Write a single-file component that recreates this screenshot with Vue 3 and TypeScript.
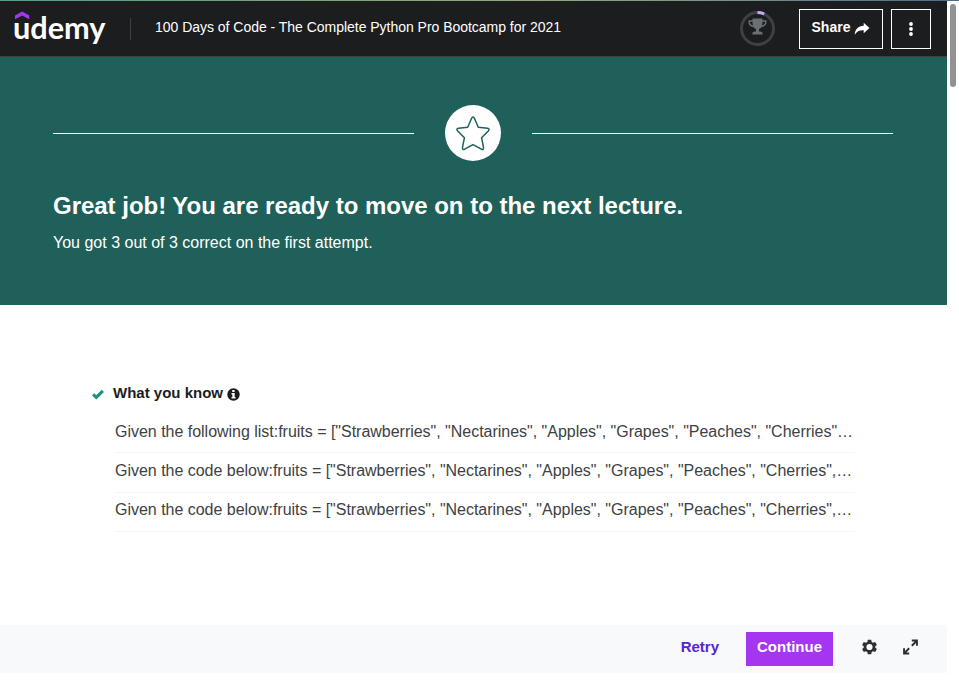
<script setup lang="ts">
const questions: string[] = [
  'Given the following list:fruits = ["Strawberries", "Nectarines", "Apples", "Grapes", "Peaches", "Cherries"…',
  'Given the code below:fruits = ["Strawberries", "Nectarines", "Apples", "Grapes", "Peaches", "Cherries",…',
  'Given the code below:fruits = ["Strawberries", "Nectarines", "Apples", "Grapes", "Peaches", "Cherries",…',
]
</script>

<template>
  <div class="window">
    <div class="strip"></div>
    <div class="body">
      <main class="page">
        <header class="header">
          <svg class="logo" width="96" height="40" viewBox="0 0 96 40">
            <path d="M3 11.300V7.400L10.200 3.400L17.300 7.400V11.300L10.200 7.400Z" fill="#a435f0" />
            <text class="logo-text" x="1" y="30.500" textLength="92.500" lengthAdjust="spacingAndGlyphs">udemy</text>
          </svg>
          <span class="divider"></span>
          <span class="course">100 Days of Code - The Complete Python Pro Bootcamp for 2021</span>
          <svg class="progress" width="35" height="35" viewBox="0.5 0.5 35 35">
            <circle cx="18" cy="18" r="16" fill="none" stroke="#3e4143" stroke-width="3" />
            <path d="M18 2A16 16 0 0 1 24.700 3.500" fill="none" stroke="#c0adf5" stroke-width="3" />
            <path fill-rule="evenodd" d="M13 8h10v1.800h4v2.200c0 2.500-2.300 4.400-5.200 4.700-.7 1-1.500 1.600-2.300 1.900v2.400h1.100c1.700 0 2.500.8 2.500 2.100v1H12.900v-1c0-1.300.8-2.100 2.500-2.100h1.100v-2.400c-.8-.3-1.600-.9-2.300-1.900C11.300 16.400 9 14.500 9 12V9.800h4zm0 3.200h-2.500v.8c0 1.400 1.200 2.500 3 3-.3-1-.5-2.400-.5-3.800zm10 0c0 1.400-.2 2.800-.5 3.800 1.800-.5 3-1.600 3-3v-.8z" fill="#6a6f73" />
          </svg>
          <button class="outline share">
            <span>Share</span>
            <svg width="16" height="14" viewBox="0 0 16 14"><path d="M9.700.8L15.500 6 9.700 11.300V8.300C5.500 8.100 2.800 9.300.8 12.800.8 7.500 4 3.900 9.700 3.700Z" fill="#fff" /></svg>
          </button>
          <button class="outline more">
            <svg width="6" height="16" viewBox="0 0 6 16" fill="#fff"><circle cx="3" cy="3" r="1.900" /><circle cx="3" cy="8" r="1.900" /><circle cx="3" cy="13" r="1.900" /></svg>
          </button>
        </header>

        <section class="hero">
          <div class="rule-row">
            <span class="rule"></span>
            <span class="badge">
              <svg width="36" height="38" viewBox="0 0 36 38"><path d="M16.600 4.300Q18 1.800 19.400 4.300L23.300 13.200 32.500 14.300Q35.200 14.900 33.300 17L26.600 23.800 28.500 33.400Q28.800 36.300 26.300 35.200L18 30.600 9.700 35.200Q7.200 36.300 7.500 33.400L9.400 23.800 2.700 17Q.8 14.900 3.500 14.300L12.700 13.200Z" fill="none" stroke="#20605b" stroke-width="1.500" stroke-linejoin="round" /></svg>
            </span>
            <span class="rule"></span>
          </div>
          <h1>Great job! You are ready to move on to the next lecture.</h1>
          <p>You got 3 out of 3 correct on the first attempt.</p>
        </section>

        <section class="results">
          <h2>
            <svg class="check" width="12" height="11" viewBox="0 0 12 11"><path d="M1.100 5.300L4.300 8.300 10.900 1.900" fill="none" stroke="#1e9180" stroke-width="3.200" /></svg>
            <span>What you know</span>
            <svg class="info" width="13" height="13" viewBox="0 0 13 13"><circle cx="6.500" cy="6.500" r="6.200" fill="#1c1d1f" /><path d="M5.200 2H7.600V4.100H5.200ZM4.500 5.100H7.700V9.100H8.500V10.500H4.500V9.100H5.300V6.500H4.500Z" fill="#fff" /></svg>
          </h2>
          <ul>
            <li v-for="(question, index) in questions" :key="index">{{ question }}</li>
          </ul>
        </section>

        <footer class="footer">
          <button class="retry">Retry</button>
          <button class="continue">Continue</button>
          <svg class="gear" width="15" height="16" viewBox="0.5 0 15 16"><path fill-rule="evenodd" fill="#2d2f31" d="M6.300.7H9.700L10.200 2.900 11.600 3.700 13.700 3 15.400 6 13.800 7.300V8.700L15.400 10 13.700 13 11.600 12.300 10.200 13.100 9.700 15.300H6.300L5.800 13.100 4.400 12.300 2.300 13 .6 10 2.200 8.700V7.300L.6 6 2.300 3 4.400 3.700 5.800 2.900ZM8 4.900A3.100 3.100 0 1 0 8 11.100 3.100 3.100 0 1 0 8 4.900Z" /></svg>
          <svg class="expand" width="15" height="16" viewBox="0.5 0 15 16"><path d="M9.300.6H15.400V6.700H13.500V4.100L10 7.400 8.600 6 12.100 2.500H9.300ZM6.700 15.400H.6V9.300H2.500V11.900L6 8.600 7.400 10 3.900 13.500H6.700Z" fill="#2d2f31" /></svg>
        </footer>
      </main>
      <aside class="scrollbar"><span class="thumb"></span></aside>
    </div>
  </div>
</template>

<style>
body { margin: 0; background: #fff; overflow: hidden; }
</style>

<style scoped>
.window { width: 959px; height: 683px; font-family: "Liberation Sans", Arial, sans-serif; color: #1c1d1f; background: #fff; }
.window * { box-sizing: border-box; }
.strip { height: 1px; background: linear-gradient(90deg, #579b8d, #74a57e 30%, #96a783 55%, #79938b 75%, #4c6d89); }
.body { display: flex; }
.page { width: 947px; height: 672px; display: flex; flex-direction: column; }
.header { height: 56px; flex: none; display: flex; align-items: center; padding: 0 16px 0 12px; background: #1c1d1f; border-bottom: 1px solid #3e4143; color: #fff; }
.logo { margin-top: -1px; flex: none; }
.logo-text { font-family: Lato, sans-serif; font-size: 31px; font-weight: 700; fill: #fff; }
.divider { width: 1px; height: 22px; margin-left: 22px; background: #3e4143; }
.course { margin-left: 24px; font-size: 14px; line-height: 20px; margin-top: -3px; white-space: nowrap; letter-spacing: -.025px; }
.progress { margin-left: auto; margin-right: 24px; }
button { font-family: inherit; font-weight: 700; font-size: 15px; padding: 0; border: 0; background: none; }
.outline { height: 40px; border: 1px solid #fff; color: #fff; display: flex; align-items: center; justify-content: center; }
.share { width: 84px; font-size: 14px; gap: 4px; margin-right: 8px; }
.share span { margin-top: -4px; }
.more { width: 40px; }
.hero { height: 248px; flex: none; padding: 48px 54px 0 53px; background: #20605b; color: #fff; }
.rule-row { display: flex; align-items: center; gap: 31px; height: 56px; }
.rule { flex: 1; height: 1px; background: #fff; }
.badge { width: 56px; height: 56px; border-radius: 50%; background: #fff; display: flex; align-items: center; justify-content: center; }
h1 { margin: 30px 0 0; font-size: 24px; line-height: 30px; white-space: nowrap; letter-spacing: -.02px; }
.hero p { margin: 11px 0 0; font-size: 16px; line-height: 22px; }
.results { flex: 1; padding: 80px 92px 0; }
h2 { display: flex; align-items: center; margin: 0; font-size: 15px; line-height: 20px; }
h2 span { margin: -2px 4px 0 9px; }
ul { list-style: none; margin: 9px 0 0 23px; padding: 0; width: 740px; }
li { height: 39px; font-size: 16px; line-height: 34px; color: #3e4143; border-bottom: 1px solid #f5f6f7; white-space: nowrap; letter-spacing: -.018px; }
li:first-child { height: 41px; line-height: 40px; }
li:nth-child(2) { height: 40px; line-height: 36px; }
.footer { height: 48px; flex: none; display: flex; align-items: center; justify-content: flex-end; padding-right: 29px; background: #f7f9fa; }
.retry { color: #5624d0; margin: -6px 27px 0 0; }
.continue { width: 87px; height: 34px; background: #a435f0; color: #fff; padding-bottom: 5px; }
.gear { margin-left: 29px; margin-top: -5px; }
.expand { margin-left: 26px; margin-top: -5px; }
.scrollbar { width: 12px; padding: 3px 3px 0; }
.thumb { display: block; width: 6px; height: 83px; border-radius: 3px; background: #929292; }
</style>
